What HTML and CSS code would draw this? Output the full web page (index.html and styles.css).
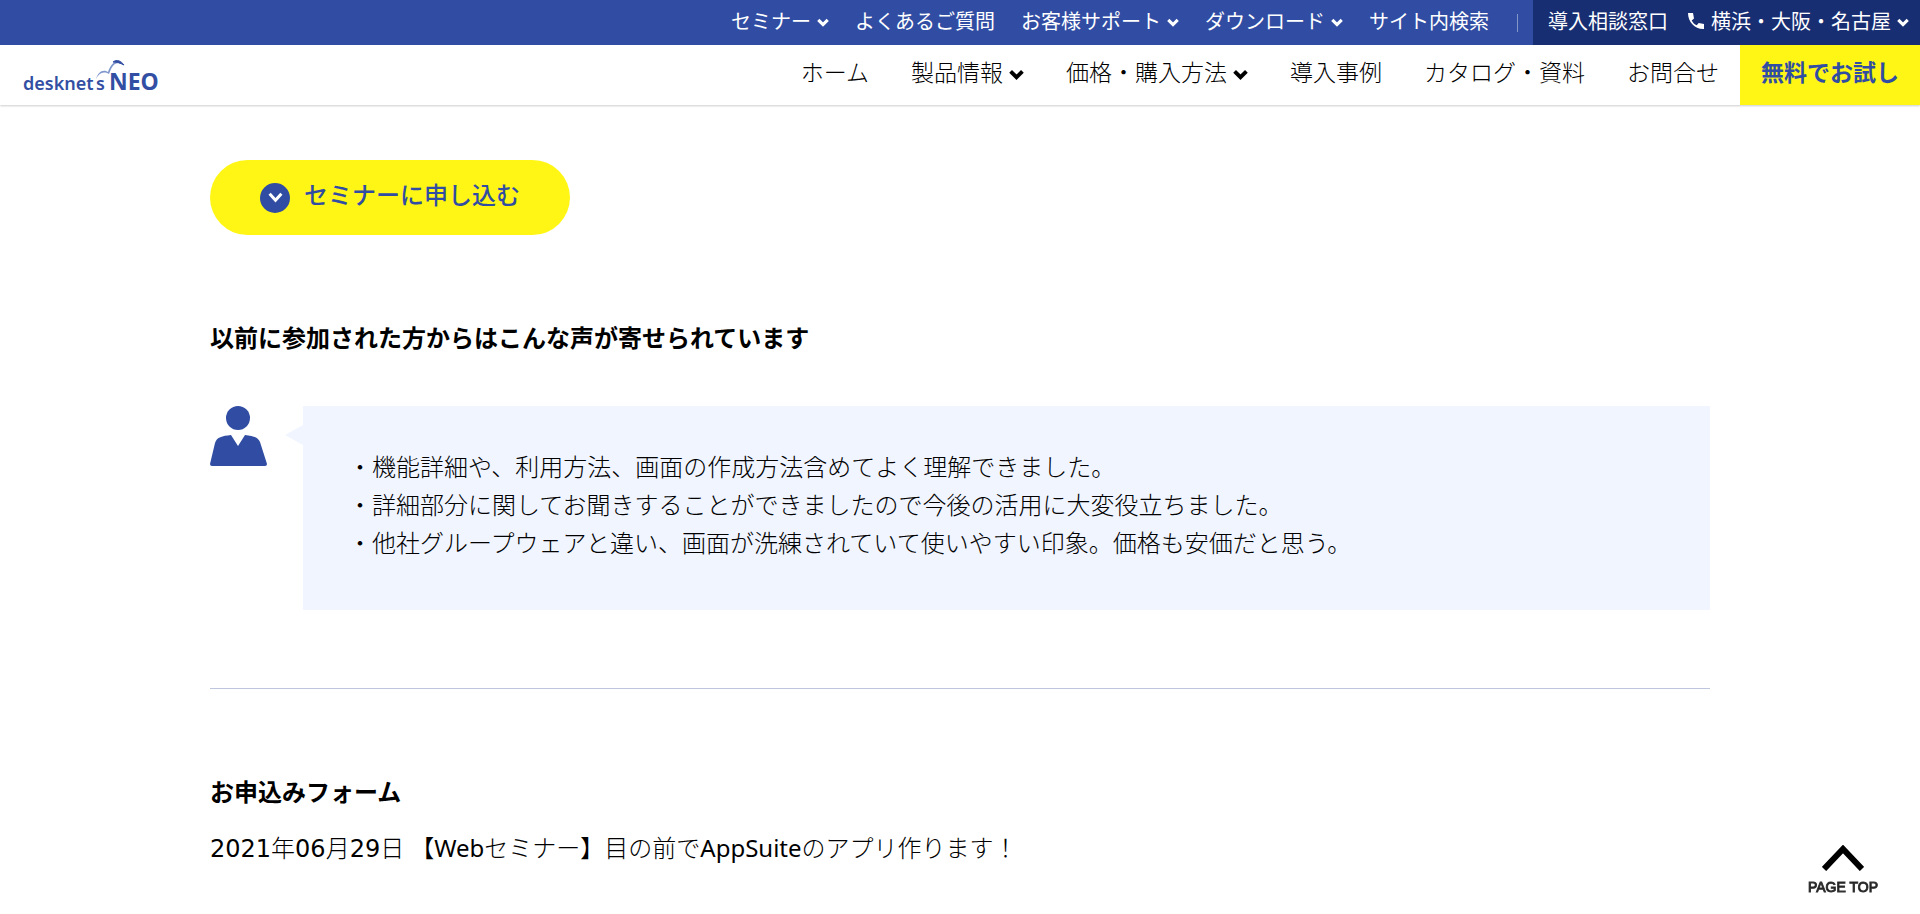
FILE: index.html
```html
<!DOCTYPE html>
<html lang="ja">
<head>
<meta charset="utf-8">
<meta name="viewport" content="width=device-width, initial-scale=1">
<title>desknet's NEO セミナー</title>
<link rel="stylesheet" href="styles.css">
</head>
<body>
<svg class="defs" aria-hidden="true">
  <symbol id="chevron" viewBox="0 0 14 10"><path d="M1.5 2 7 7.5 12.500 2" fill="none" stroke="currentColor" stroke-width="3.600"/></symbol>
  <symbol id="chevron-thin" viewBox="0 0 14 10"><path d="M1.5 1.500 7 7.5 12.500 1.500" fill="none" stroke="currentColor" stroke-width="2.800"/></symbol>
</svg>
<header class="site-header">
  <nav class="utility" aria-label="サポート">
    <ul class="utility-list">
      <li><a href="#">セミナー<svg class="chev"><use href="#chevron"/></svg></a></li>
      <li><a href="#">よくあるご質問</a></li>
      <li><a href="#">お客様サポート<svg class="chev"><use href="#chevron"/></svg></a></li>
      <li><a href="#">ダウンロード<svg class="chev"><use href="#chevron"/></svg></a></li>
      <li><a href="#">サイト内検索</a></li>
    </ul>
    <span class="divider"></span>
    <div class="contact">
      <a href="#">導入相談窓口</a>
      <a href="#"><svg class="phone" viewBox="0 0 18 18"><path d="M1 1h5l1 5.500-2.300 2c1.200 2.300 2.800 3.800 5 4.800l2-2.300 5.300 1v5C8 17.500 1 10 1 1z" fill="currentColor"/></svg>横浜・大阪・名古屋<svg class="chev"><use href="#chevron"/></svg></a>
    </div>
  </nav>
  <div class="main-bar">
    <a class="logo" href="#" aria-label="desknet's NEO">
      <svg viewBox="0 0 138 32" class="logo-art">
        <text class="logo-word" x="0" y="30">desknet</text>
        <text class="logo-word" x="73" y="30">s</text>
        <text class="logo-neo" x="86" y="30">NEO</text>
        <path d="M73 19C75 13 78 10 83 11L85 12C88 3 93-2 101 5 95 1 91 3 88 9L86 14C80 11 76 13 73 19Z" fill="#7f97cb"/>
        <path d="M90 2C94-1 98 1 101 5 97 3 94 2 90 2Z" fill="#334fa3" stroke="#334fa3"/>
      </svg>
    </a>
    <nav class="main-nav" aria-label="メイン">
      <a href="#">ホーム</a>
      <a href="#">製品情報<svg class="chev"><use href="#chevron"/></svg></a>
      <a href="#">価格・購入方法<svg class="chev"><use href="#chevron"/></svg></a>
      <a href="#">導入事例</a>
      <a href="#">カタログ・資料</a>
      <a href="#">お問合せ</a>
      <a class="trial" href="#">無料でお試し</a>
    </nav>
  </div>
</header>
<main class="content">
  <a class="apply" href="#form"><span class="apply-icon"><svg class="chev"><use href="#chevron-thin"/></svg></span><span class="apply-label">セミナーに申し込む</span></a>
  <h2 class="title">以前に参加された方からはこんな声が寄せられています</h2>
  <section class="voice">
    <svg class="person" viewBox="0 0 57 60" aria-hidden="true"><circle cx="28" cy="12" r="12" fill="#304da3"/><path d="M21 29C12 30 7 31 5 37L0 58Q0 60 2 60H55Q57 60 57 58L50 36C48 31 43 30 35 29L28 40Z" fill="#304da3"/></svg>
    <div class="bubble">
      <p>・機能詳細や、利用方法、画面の作成方法含めてよく理解できました。</p>
      <p>・詳細部分に関してお聞きすることができましたので今後の活用に大変役立ちました。</p>
      <p>・他社グループウェアと違い、画面が洗練されていて使いやすい印象。価格も安価だと思う。</p>
    </div>
  </section>
  <hr class="rule">
  <section id="form">
    <h2 class="form-title">お申込みフォーム</h2>
    <p class="seminar"><time class="date" datetime="2021-06-29"><span class="latin">2021</span>年<span class="latin">06</span>月<span class="latin">29</span>日</time>【<span class="latin">Web</span>セミナー】目の前で<span class="latin">AppSuite</span>のアプリ作ります！</p>
  </section>
</main>
<a class="page-top" href="#"><svg class="page-top-arrow" viewBox="0 0 42 26" aria-hidden="true"><path d="M2 24 21 4 40 24" fill="none" stroke="#000" stroke-width="6"/></svg>PAGE TOP</a>
</body>
</html>
```
FILE: styles.css
```css
* { box-sizing: border-box; }
body {
  margin: 0;
  background: #fff;
  color: #000;
  font: 300 24px/38px "Noto Sans CJK JP", sans-serif;
}
a { color: inherit; text-decoration: none; white-space: nowrap; }
p, h2, ul { margin: 0; padding: 0; }
ul { list-style: none; }
.defs { position: absolute; width: 0; height: 0; }

.site-header {
  position: sticky;
  top: 0;
  z-index: 2;
  background: #fff;
  box-shadow: 0 1px 2px rgba(0, 0, 0, .2);
}
.utility {
  display: flex;
  justify-content: flex-end;
  align-items: center;
  height: 45px;
  background: #304da3;
  color: #fff;
  font: 400 20px/42px "Noto Sans CJK JP", sans-serif;
}
.utility-list { display: flex; gap: 26px; }
.utility a { display: flex; align-items: center; padding-bottom: 3px; }
.utility .chev { width: 12px; height: 9px; margin: 3px 0 0 6px; }
.divider { width: 1px; height: 18px; margin: 0 15px 0 28px; background: #8396c8; }
.contact {
  display: flex;
  gap: 19px;
  height: 45px;
  padding: 0 11px 0 15px;
  background: #182e73;
}
.phone { width: 18px; height: 18px; margin-right: 6px; }

.main-bar {
  display: flex;
  justify-content: space-between;
  height: 60px;
  padding-left: 23px;
}
.logo { padding-top: 15px; }
.logo-art { display: block; width: 138px; height: 32px; overflow: visible; fill: #334fa3; }
.logo-word { font: 600 18px "Noto Sans", sans-serif; }
.logo-neo { font: 700 23px "Noto Sans", sans-serif; }
.main-nav {
  display: flex;
  font: 300 23px/52px "Noto Sans CJK JP", sans-serif;
}
.main-nav a { display: flex; align-items: center; padding: 0 21px 8px; }
.main-nav .chev { width: 15px; height: 11px; margin: 6px 0 0 6px; }
.main-nav .trial { background: #fff615; color: #304da3; font-weight: 700; }

.content { max-width: 1500px; margin: 0 auto; padding: 55px 0 47px; }
.apply {
  display: flex;
  align-items: center;
  width: 360px;
  height: 75px;
  padding-left: 50px;
  border-radius: 38px;
  background: #fff615;
  color: #304da3;
  font-weight: 500;
}
.apply-icon {
  display: grid;
  place-items: center;
  width: 30px;
  height: 30px;
  margin-right: 14px;
  border-radius: 50%;
  background: #304da3;
  color: #fff;
}
.apply-icon .chev { width: 15px; height: 11px; }
.apply-label { padding-bottom: 8px; }
.title, .form-title { font-size: 24px; line-height: 38px; font-weight: 700; }
.title { margin-top: 83px; }
.voice { display: flex; gap: 36px; margin-top: 50px; }
.person { flex: none; width: 57px; height: 60px; }
.bubble {
  position: relative;
  flex: 1;
  padding: 41px 45px 49px;
  background: #f0f5ff;
}
.bubble::before {
  content: "";
  position: absolute;
  top: 19px;
  left: -18px;
  border: solid transparent;
  border-width: 10px 18px 10px 0;
  border-right-color: #f0f5ff;
}
.rule { height: 1px; margin: 78px 0 83px; border: 0; background: #bfc5dd; }
.seminar { margin-top: 18px; }
.latin { font-family: "Noto Sans", sans-serif; font-weight: 400; }
.date { margin-right: 6px; }
.date .latin { font-family: "DejaVu Sans", sans-serif; }

.page-top {
  position: fixed;
  right: 42px;
  bottom: 20px;
  display: flex;
  flex-direction: column;
  align-items: center;
  gap: 9px;
  font: 400 14px/14px "Liberation Sans", Arial, sans-serif;
  -webkit-text-stroke: 1px #333;
}
.page-top-arrow { width: 42px; height: 26px; }
```
